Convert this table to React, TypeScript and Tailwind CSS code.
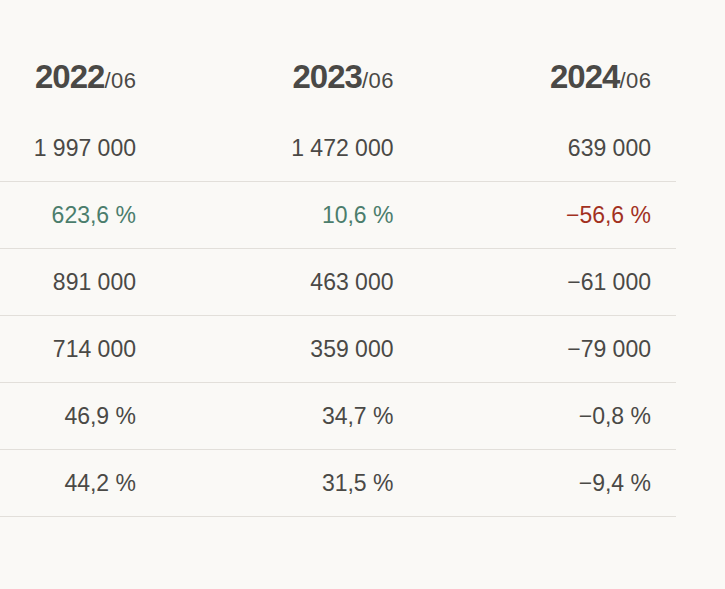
const years = ['2022', '2023', '2024']

type Cell = { value: string; tone?: 'up' | 'down' }

const rows: Cell[][] = [
  [{ value: '1 997 000' }, { value: '1 472 000' }, { value: '639 000' }],
  [{ value: '623,6 %', tone: 'up' }, { value: '10,6 %', tone: 'up' }, { value: '−56,6 %', tone: 'down' }],
  [{ value: '891 000' }, { value: '463 000' }, { value: '−61 000' }],
  [{ value: '714 000' }, { value: '359 000' }, { value: '−79 000' }],
  [{ value: '46,9 %' }, { value: '34,7 %' }, { value: '−0,8 %' }],
  [{ value: '44,2 %' }, { value: '31,5 %' }, { value: '−9,4 %' }]
]

const toneClass = (tone?: Cell['tone']) => {
  if (tone === 'up') return 'text-[#4b7d6c]'
  if (tone === 'down') return 'text-[#a2311f]'
  return 'text-[#4a4946]'
}

export default function App() {
  return (
    <div className="min-h-[589px] w-[725px] bg-[#faf9f6] pt-[48px] font-['Liberation_Sans',Arial,sans-serif] text-[#4a4946]">
      <div className="grid w-[676px] grid-cols-[161px_257.5px_257.5px]">
        {years.map(year => (
          <div key={year} className="flex h-[67px] items-baseline justify-end pr-[25px] pt-[4px]">
            <span className="text-[33px] font-bold tracking-[-1px]">{year}</span>
            <span className="mr-[-0.5px] text-[22px] font-normal tracking-[0.5px]">/06</span>
          </div>
        ))}

        {rows.map((row, i) =>
          row.map((cell, j) => (
            <div
              key={`${i}-${j}`}
              className={`flex h-[67px] items-center justify-end border-b border-[#e2dfda] pr-[25px] text-[23px] ${toneClass(cell.tone)}`}
            >
              {cell.value}
            </div>
          ))
        )}
      </div>
    </div>
  )
}
